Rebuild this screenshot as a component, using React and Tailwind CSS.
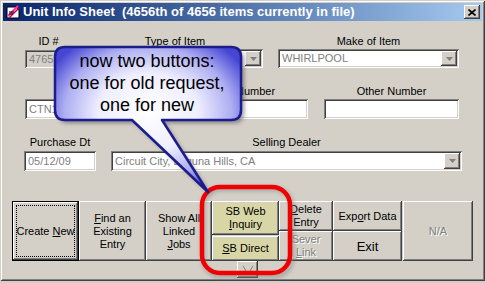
import React from 'react';

const raised = "shadow-[inset_-1px_-1px_0_#404040,inset_1px_1px_0_#ffffff,inset_-2px_-2px_0_#808080,inset_2px_2px_0_#d4d0c8]";
const sunken = "shadow-[inset_1px_1px_0_#808080,inset_-1px_-1px_0_#ffffff,inset_2px_2px_0_#404040,inset_-2px_-2px_0_#d4d0c8]";
const disabledText = "text-[#808080] [text-shadow:1px_1px_0_#ffffff]";

function Label({ children }) {
  return <div className="h-[13px] leading-[13px] text-center whitespace-nowrap">{children}</div>;
}

function Field({ value, className = '', gray }) {
  return (
    <div className={`${sunken} ${gray ? 'bg-[#d4d0c8]' : 'bg-white'} ${className} flex items-center pl-[4px] text-[#808080] overflow-hidden whitespace-nowrap`}>
      {value}
    </div>
  );
}

function Combo({ value, className = '' }) {
  return (
    <div className={`${sunken} bg-white ${className} flex items-center pl-[4px] pr-[2px] py-[2px] text-[#808080] whitespace-nowrap`}>
      <span className="flex-1 overflow-hidden">{value}</span>
      <div className={`${raised} bg-[#d4d0c8] w-[16px] h-full flex items-center justify-center`}>
        <svg width="7" height="4" viewBox="0 0 7 4"><path d="M0 0h7L3.5 4z" fill="#808080" /></svg>
      </div>
    </div>
  );
}

function Btn({ children, className = '', disabled }) {
  return (
    <div className={`${raised} ${className} flex flex-col items-center justify-center text-center leading-[13px] ${disabled ? disabledText : 'text-black'}`}>
      {children}
    </div>
  );
}

function Callout() {
  return (
    <div className="absolute inset-0 pointer-events-none">
      <svg width="485" height="283" className="absolute left-0 top-0">
        <defs>
          <radialGradient id="cg" cx="0.5" cy="0.45" r="0.6">
            <stop offset="0" stopColor="#ffffff" />
            <stop offset="0.45" stopColor="#eeeeff" />
            <stop offset="0.75" stopColor="#aeaef2" />
            <stop offset="1" stopColor="#4646d4" />
          </radialGradient>
          <filter id="sh" x="-20%" y="-20%" width="140%" height="140%">
            <feGaussianBlur stdDeviation="2" />
          </filter>
        </defs>
        {/* red ring */}
        <rect x="203" y="189" width="89" height="87" rx="18" fill="none" stroke="#808080" strokeWidth="4" opacity="0.6" filter="url(#sh)" />
        <rect x="202" y="187" width="88" height="86" rx="18" fill="none" stroke="#f00000" strokeWidth="4.5" />
        {/* balloon */}
        <path d="M65 47 H231 Q241 47 241 57 V110 Q241 120 231 120 H162 L208 192 L132 120 H65 Q55 120 55 110 V57 Q55 47 65 47 Z"
          transform="translate(3 3)" fill="#404040" opacity="0.55" filter="url(#sh)" />
        <path d="M65 47 H231 Q241 47 241 57 V110 Q241 120 231 120 H162 L208 192 L132 120 H65 Q55 120 55 110 V57 Q55 47 65 47 Z"
          fill="url(#cg)" stroke="#1c1c8c" strokeWidth="2.5" strokeLinejoin="round" />
      </svg>
      <div className="absolute left-[54px] top-[50px] w-[186px] text-center text-[18px] leading-[22px] text-black font-['Liberation_Sans',Arial,sans-serif]">
        <div>now two buttons:</div>
        <div>one for old request,</div>
        <div>one for new</div>
      </div>
    </div>
  );
}

export default function App() {
  return (
    <div className="w-[485px] h-[283px] overflow-hidden bg-[#d4d0c8] font-['Liberation_Sans',Arial,sans-serif] text-[11px] text-black">
      <div className="relative w-[485px] h-[281px] shadow-[inset_1px_1px_0_#d4d0c8,inset_-1px_-1px_0_#404040,inset_2px_2px_0_#ffffff,inset_-2px_-2px_0_#808080] p-[3px] flex flex-col">
        {/* Title bar */}
        <div className="h-[18px] flex items-center bg-gradient-to-r from-[#0a246a] to-[#a6caf0] pl-[2px] pr-[2px]">
          <svg width="16" height="16" viewBox="0 0 16 16" className="shrink-0">
            <path d="M2 3h9l3 3v8H2z" fill="#ffffff" stroke="#000" strokeWidth="1" />
            <path d="M3 12 L13 2" stroke="#ff2aa0" strokeWidth="2" />
            <path d="M4 14 L14 4" stroke="#c00060" strokeWidth="1.5" />
            <path d="M4 8h5M4 10h4" stroke="#000" strokeWidth="1" />
          </svg>
          <span className="ml-[2px] text-white font-bold text-[13px] whitespace-pre">Unit Info Sheet  (4656th of 4656 items currently in file)</span>
          <div className="flex-1" />
          <div className={`${raised} bg-[#d4d0c8] w-[16px] h-[14px] flex items-center justify-center`}>
            <svg width="8" height="7" viewBox="0 0 8 7"><path d="M0.5 0.5 L7.5 6.5 M7.5 0.5 L0.5 6.5" stroke="#000" strokeWidth="1.6" /></svg>
          </div>
        </div>

        {/* Row 1 */}
        <div className="flex mt-[14px] ml-[22px]">
          <div className="w-[47px]"><Label>ID #</Label><Field gray value="4765" className="mt-[2px] h-[18px]" /></div>
          <div className="w-[176px] ml-[15px]"><Label>Type of Item</Label><Combo value="" className="mt-[1px] h-[19px]" /></div>
          <div className="w-[181px] ml-[15px]"><Label>Make of Item</Label><Combo value="WHIRLPOOL" className="mt-[1px] h-[19px]" /></div>
        </div>

        {/* Row 2 */}
        <div className="flex mt-[17px] ml-[22px]">
          <div className="w-[130px]"><Label>&nbsp;</Label><Field value="CTN1234567" className="mt-[1px] h-[20px]" /></div>
          <div className="w-[138px] ml-[15px]"><Label>Model Number</Label><Field value="" className="mt-[1px] h-[20px]" /></div>
          <div className="w-[135px] ml-[16px]"><Label>Other Number</Label><Field value="" className="mt-[1px] h-[20px]" /></div>
        </div>

        {/* Row 3 */}
        <div className="flex mt-[17px] ml-[21px]">
          <div className="w-[72px]"><Label>Purchase Dt</Label><Field value="05/12/09" className="mt-[2px] h-[20px]" /></div>
          <div className="w-[351px] ml-[15px]"><Label>Selling Dealer</Label><Combo value="Circuit City, Laguna Hills, CA" className="mt-[2px] h-[20px]" /></div>
        </div>

        {/* Buttons */}
        <div className="flex mt-[30px] ml-[9px] items-start">
          <div className="w-[67px] h-[60px] border border-black">
            <div className={`${raised} h-full p-[3px]`}>
              <div className="h-full border border-dotted border-black flex items-center justify-center whitespace-nowrap">
                Create&nbsp;<u>N</u>ew
              </div>
            </div>
          </div>
          <Btn className="w-[67px] h-[60px]"><span><u>F</u>ind an</span><span>Existing</span><span>Entry</span></Btn>
          <Btn className="w-[66px] h-[60px]"><span>Show All</span><span>Linked</span><span><u>J</u>obs</span></Btn>
          <div className="w-[67px] flex flex-col">
            <Btn className="h-[34px] bg-[#d8d6a6]"><span>SB Web</span><span><u>I</u>nquiry</span></Btn>
            <Btn className="h-[25px] mt-[1px] bg-[#d8d6a6]"><span><u>S</u>B Direct</span></Btn>
            <div className={`${raised} ml-[25px] w-[21px] h-[17px] flex items-center justify-center`}>
              <svg width="12" height="8" viewBox="0 0 12 8"><path d="M1 0 L6 8 L11 0" fill="none" stroke="#808080" strokeWidth="1" /></svg>
            </div>
          </div>
          <div className="w-[54px] flex flex-col">
            <Btn className="h-[30px]"><span><u>D</u>elete</span><span>Entry</span></Btn>
            <Btn disabled className="h-[30px]"><span>Sever</span><span><u>L</u>ink</span></Btn>
          </div>
          <div className="w-[69px] flex flex-col">
            <Btn className="h-[30px]"><span>Exp<u>o</u>rt Data</span></Btn>
            <Btn className="h-[30px] text-[13px]"><span>Exit</span></Btn>
          </div>
          <Btn disabled className="w-[70px] h-[60px] ml-[1px]"><span>N/A</span></Btn>
        </div>

        <Callout />
      </div>
    </div>
  );
}
